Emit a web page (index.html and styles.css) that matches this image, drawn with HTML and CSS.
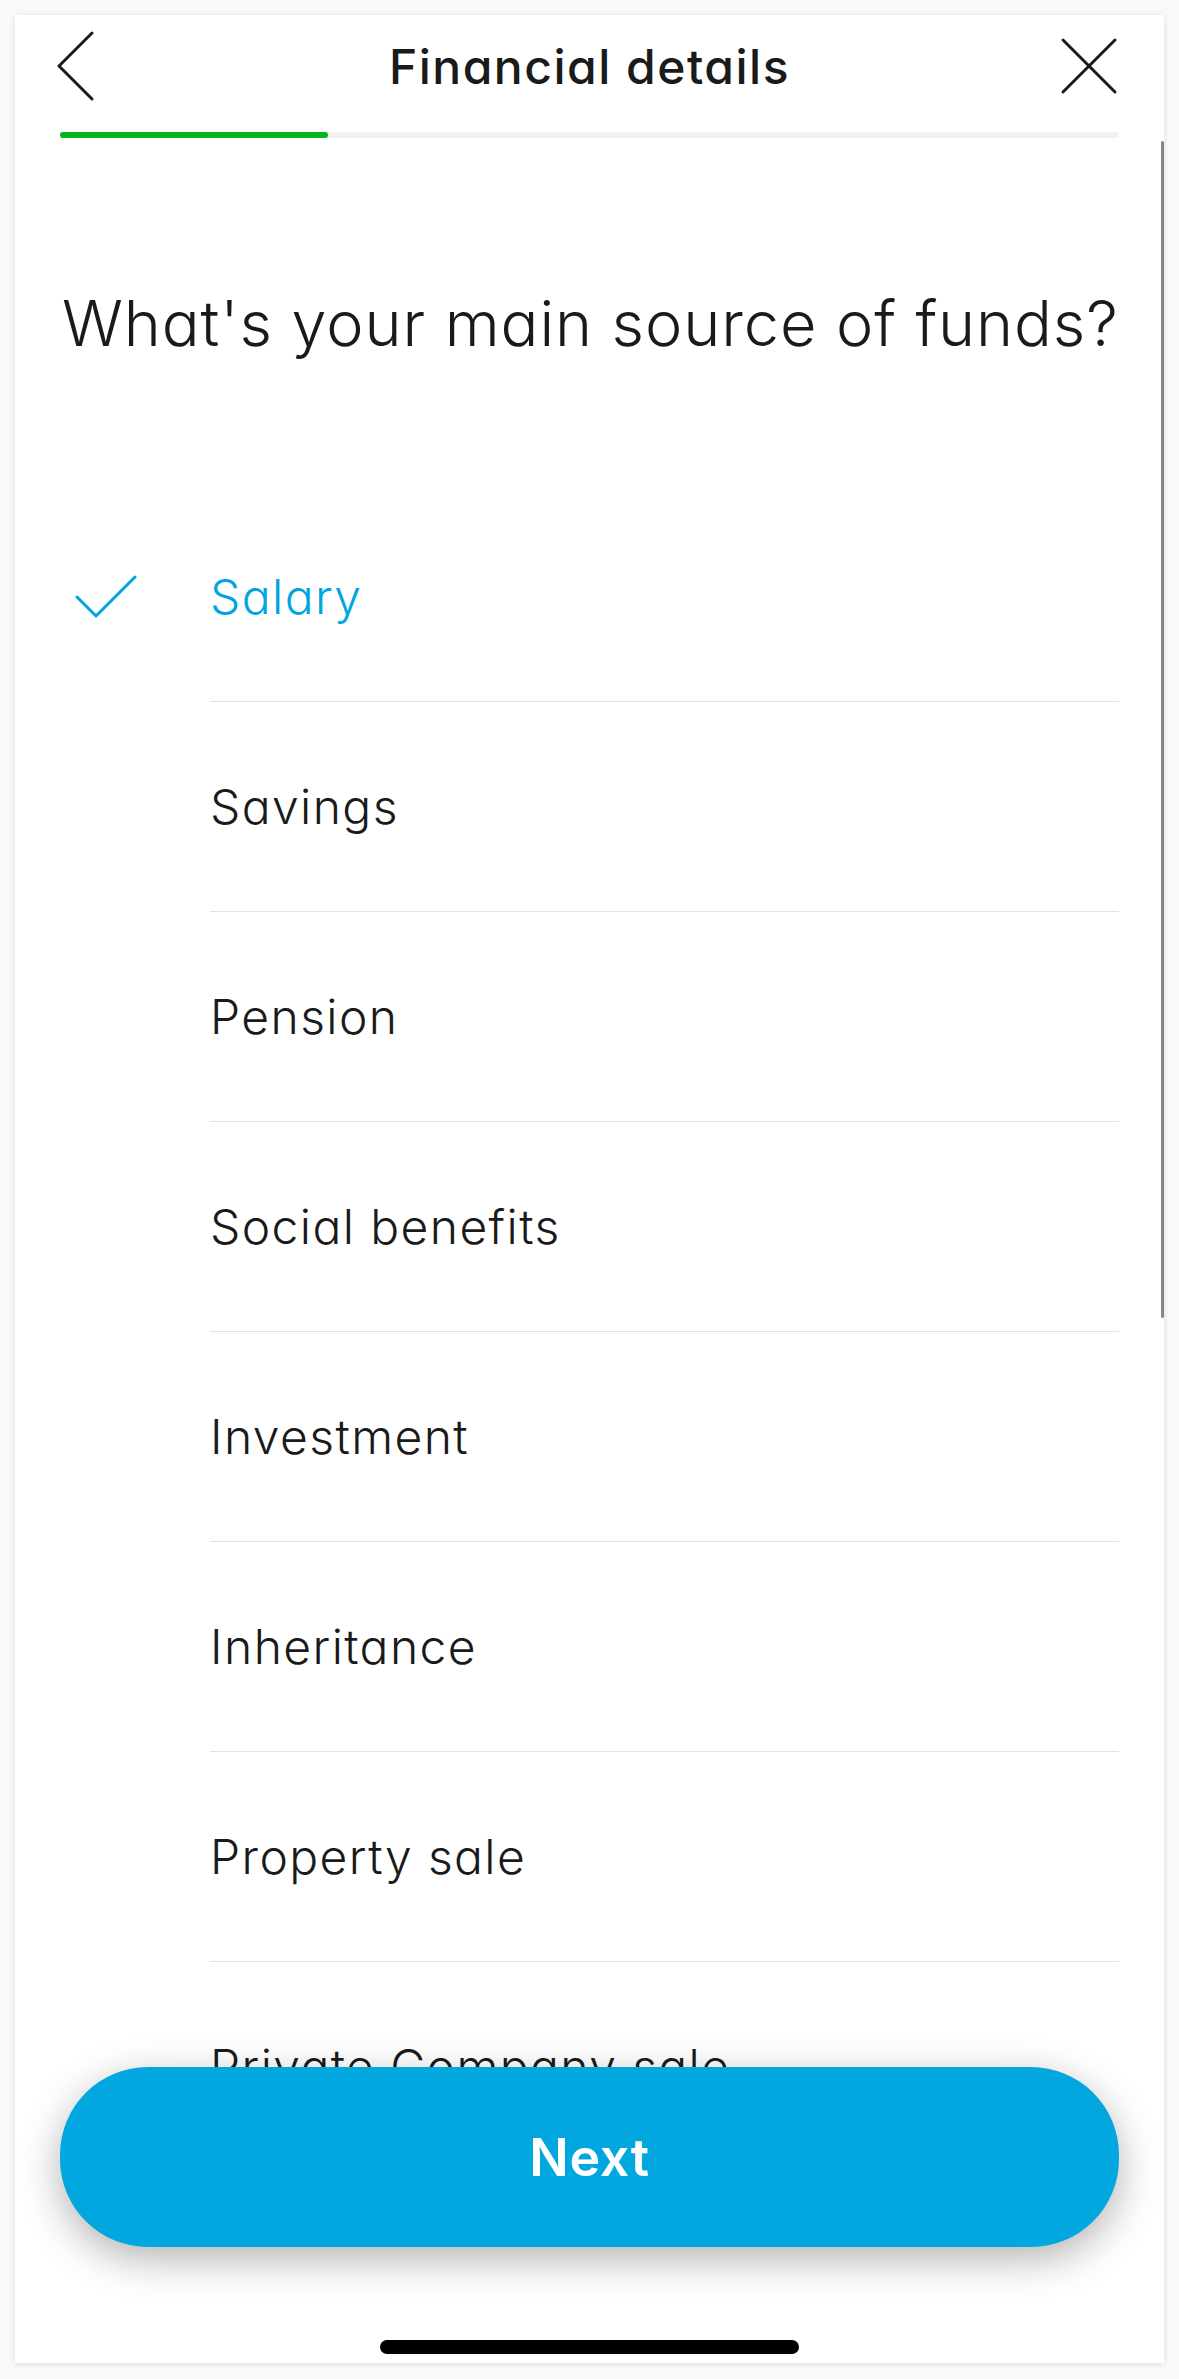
FILE: index.html
```html
<!DOCTYPE html>
<html lang="en">
<head>
    <meta charset="UTF-8">
    <meta name="viewport" content="width=device-width, initial-scale=1.0">
    <title>Financial details</title>
    <link rel="stylesheet" href="styles.css">
</head>
<body>
    <div class="screen">
        <div class="topbar">
            <svg class="back-icon" width="40" height="70" viewBox="0 0 40 70">
                <polyline points="36,2 3,35 36,68" fill="none" stroke="#1a1a1a" stroke-width="3" stroke-linecap="round" stroke-linejoin="round"/>
            </svg>
            <div class="title">Financial details</div>
            <svg class="close-icon" width="58" height="58" viewBox="0 0 58 58">
                <line x1="3" y1="3" x2="55" y2="55" stroke="#1a1a1a" stroke-width="3" stroke-linecap="round"/>
                <line x1="55" y1="3" x2="3" y2="55" stroke="#1a1a1a" stroke-width="3" stroke-linecap="round"/>
            </svg>
        </div>

        <div class="progress"><div class="progress-fill"></div></div>

        <h1 class="question">What's your main source of funds?</h1>

        <ul class="options">
            <li class="option selected">
                <span class="check-col">
                    <svg width="62" height="44" viewBox="0 0 62 44">
                        <polyline points="2,22 21,41 60,2" fill="none" stroke="#00a5df" stroke-width="3" stroke-linecap="round" stroke-linejoin="round"/>
                    </svg>
                </span>
                <span class="label">Salary</span>
            </li>
            <li class="option"><span class="check-col"></span><span class="label">Savings</span></li>
            <li class="option"><span class="check-col"></span><span class="label">Pension</span></li>
            <li class="option"><span class="check-col"></span><span class="label">Social benefits</span></li>
            <li class="option"><span class="check-col"></span><span class="label">Investment</span></li>
            <li class="option"><span class="check-col"></span><span class="label">Inheritance</span></li>
            <li class="option"><span class="check-col"></span><span class="label">Property sale</span></li>
            <li class="option"><span class="check-col"></span><span class="label">Private Company sale</span></li>
        </ul>

        <div class="scrollbar"></div>

        <button class="next-btn">Next</button>
        <div class="home-indicator"></div>
    </div>
</body>
</html>
```

FILE: styles.css
```css
html, body { margin: 0; padding: 0; }
body { background-color: #f9f9f9; font-family: Inter, "Noto Sans", sans-serif; font-feature-settings: "cv11" 1; color: #1a1a1a; }

.screen { position: relative; margin: 15px 15px 16px 15px; width: 1149px; height: 2348px; background: #fff; box-shadow: 0 1px 6px rgba(0, 0, 0, 0.12); overflow: hidden; box-sizing: border-box; padding: 0 45px; }

.topbar { height: 102px; display: grid; grid-template-columns: 1fr auto 1fr; align-items: center; }
.back-icon { margin-left: -4px; justify-self: start; }
.title { font-size: 48px; font-weight: 500; letter-spacing: 1.5px; }
.close-icon { margin-right: 1px; justify-self: end; }

.progress { margin-top: 15px; height: 6px; border-radius: 3px; background: #f2f2f4; }
.progress-fill { width: 268px; height: 100%; border-radius: 3px; background: #00b81c; }

.question { margin: 147px 0 0 2px; font-size: 63px; font-weight: 300; line-height: 76px; letter-spacing: 0.9px; white-space: nowrap; }

.options { list-style: none; margin: 131px 0 0 0; padding: 0; }
.option { display: flex; align-items: stretch; }
.check-col { width: 150px; flex: none; display: flex; align-items: center; padding-left: 15px; box-sizing: border-box; }
.label { flex: 1; padding: 76px 0 75px 0; line-height: 58px; font-size: 48px; font-weight: 300; letter-spacing: 1.4px; border-bottom: 1px solid #e2e2e2; }
.selected .label { color: #00a5df; }

.scrollbar { position: absolute; top: 126px; right: 0; width: 3px; height: 1177px; border-radius: 2px; background: #858585; }

.next-btn { position: absolute; left: 45px; top: 2052px; width: 1059px; height: 180px; border: none; border-radius: 88px; background: #02a7e0; color: #fff; font-family: Inter, "Noto Sans", sans-serif; font-size: 52px; font-weight: 600; letter-spacing: 0.6px; box-shadow: 0 12px 40px rgba(0, 0, 0, 0.3); cursor: pointer; }

.home-indicator { position: absolute; left: 365px; top: 2325px; width: 419px; height: 14px; border-radius: 7px; background: #000; }
```
